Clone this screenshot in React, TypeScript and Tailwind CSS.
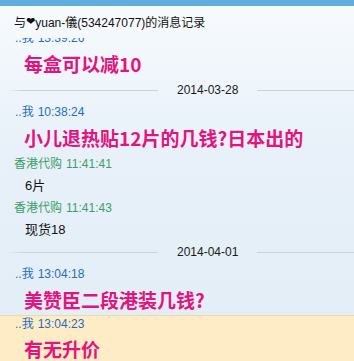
const sans = { fontFamily: '"Liberation Sans", "Noto Sans CJK SC", sans-serif' };
const cjk = { fontFamily: '"Noto Sans CJK SC", "Liberation Sans", sans-serif' };

function Stamp({ me, time, tight }: { me: boolean; time: string; tight?: boolean }) {
    return (
        <div
            className={`${tight ? "h-[15px] mb-[3px]" : "h-[22px]"} flex items-center text-[12px] ${
                me ? "pl-[15px] text-[#1f6cc2]" : "pl-[14px] text-[#3d9f67]"
            }`}
            style={sans}
        >
            {me ? "..我" : "香港代购"}
            <span className="ml-[4px]">{time}</span>
        </div>
    );
}

function Big({ text }: { text: string }) {
    return (
        <div className="h-[30px] flex items-center pl-[24px] text-[19px] font-bold text-[#e5137e]" style={cjk}>
            {text}
        </div>
    );
}

function Plain({ text }: { text: string }) {
    return (
        <div className="h-[22px] flex items-center pl-[25px] text-[13px] text-[#111]" style={sans}>
            {text}
        </div>
    );
}

function DateRow({ date }: { date: string }) {
    return (
        <div className="h-[22px] flex items-center">
            <div className="ml-[6px] w-[152px] h-px bg-[linear-gradient(to_right,transparent,#c3d3e2_12%,#c3d3e2)]" />
            <div className="mx-[19px] text-[12px] text-[#1a1a1a]" style={sans}>
                {date}
            </div>
            <div className="flex-1 h-px bg-[#c3d3e2]" />
        </div>
    );
}

export default function App() {
    return (
        <div className="w-[354px] h-[361px] overflow-hidden flex flex-col bg-[linear-gradient(to_bottom,#f8fbfe_0%,#e8f1f9_40%,#e2edf6_100%)]">
            <div className="h-[6px] bg-[#62abdd] shrink-0" />
            <div className="h-[32px] shrink-0 flex items-start pt-[8px] pl-[14px] text-[12px] text-[#111]" style={sans}>
                与<span style={{ fontFamily: '"DejaVu Sans", sans-serif' }} className="text-[11px]">{"\u2764\uFE0E"}</span>yuan-儀(534247077)的消息记录
            </div>
            <div className="flex-1 overflow-hidden">
                <div className="-mt-[11px]">
                    <Stamp me time="13:39:26" />
                    <Big text="每盒可以减10" />
                    <DateRow date="2014-03-28" />
                    <Stamp me time="10:38:24" />
                    <Big text="小儿退热贴12片的几钱?日本出的" />
                    <Stamp me={false} time="11:41:41" />
                    <Plain text="6片" />
                    <Stamp me={false} time="11:41:43" />
                    <Plain text="现货18" />
                    <DateRow date="2014-04-01" />
                    <Stamp me time="13:04:18" />
                    <Big text="美赞臣二段港装几钱?" />
                    <div className="bg-[#feecc6] border-t border-[#f1d9a8] pb-4">
                        <Stamp me time="13:04:23" tight />
                        <Big text="有无升价" />
                    </div>
                </div>
            </div>
        </div>
    );
}
